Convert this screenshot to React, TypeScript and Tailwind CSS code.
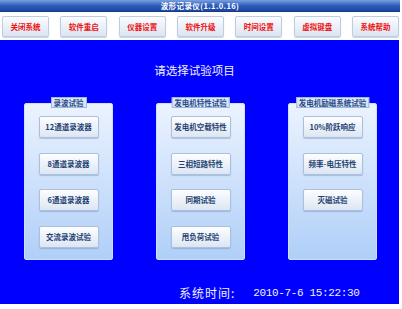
import React from "react";

const cjk = { fontFamily: '"Noto Sans CJK SC", "Noto Sans", sans-serif' };

const toolbar = ["关闭系统", "软件重启", "仪器设置", "软件升级", "时间设置", "虚拟键盘", "系统帮助"];

const panels = [
  { title: "录波试验", items: ["12通道录波器", "8通道录波器", "6通道录波器", "交流录波试验"] },
  { title: "发电机特性试验", items: ["发电机空载特性", "三相短路特性", "同期试验", "甩负荷试验"] },
  { title: "发电机励磁系统试验", items: ["10%阶跃响应", "频率-电压特性", "灭磁试验"] },
];

export default function App() {
  return (
    <div className="w-[402px] h-[309px] bg-white overflow-hidden" style={cjk}>
      <div className="w-[400px] h-[12px] bg-gradient-to-b from-[#7a9fe0] via-[#2f5fbc] to-[#1d469f] flex items-center justify-center border-b border-[#17388a]">
        <span className="text-white text-[7.5px] leading-[8px] tracking-[0.4px] font-bold">波形记录仪(1.1.0.16)</span>
      </div>
      <div className="flex justify-between w-[397px] ml-[2px] mt-[4px]">
        {toolbar.map((t) => (
          <div
            key={t}
            className="w-[47px] h-[21px] rounded-[2px] border border-[#bfcde3] bg-gradient-to-b from-[#fbfcfe] to-[#dbe5f2] flex items-center justify-center shadow-[0_1px_1px_rgba(120,140,180,0.4)]"
          >
            <span className="text-[#ee1010] text-[7.5px] leading-[8px] font-bold">{t}</span>
          </div>
        ))}
      </div>
      <div className="w-[399px] h-[264px] mt-[3px] bg-[#0000fe] flex flex-col">
        <div className="mt-[24px] h-[12px] flex justify-center pr-[10px]">
          <span className="text-[#eef2ff] text-[11.5px] leading-[12px]">请选择试验项目</span>
        </div>
        <div className="mt-[27px] flex pl-[24px] gap-[43px]">
          {panels.map((p) => (
            <div
              key={p.title}
              className="relative w-[89px] h-[157px] rounded-[2px] border border-[#cfe0fa] bg-gradient-to-b from-[#ecf3fe] to-[#b0cff8] flex flex-col items-center pt-[12px] gap-[14.5px]"
            >
              <div className="absolute top-[-7px] left-1/2 -translate-x-1/2 h-[11px] px-[2px] border border-[#9db8df] bg-[#d9e7fb] flex items-center whitespace-nowrap">
                <span className="text-[#2b4a82] text-[7.5px] leading-[8px] font-bold">{p.title}</span>
              </div>
              {p.items.map((it) => (
                <div
                  key={it}
                  className="w-[60px] h-[22px] rounded-[2px] border border-[#abc0dc] bg-gradient-to-b from-[#fdfeff] to-[#dce6f3] flex items-center justify-center shadow-[0_1px_1px_rgba(90,120,170,0.35)]"
                >
                  <span className="text-[#243f72] text-[7.5px] leading-[8px] font-bold whitespace-nowrap">{it}</span>
                </div>
              ))}
            </div>
          ))}
        </div>
        <div className="mt-[27px] flex items-center pl-[179px] h-[12px]">
          <span className="text-[#eef2ff] text-[12px] leading-[12px] tracking-[1px]">系统时间:</span>
          <span
            className="ml-[18px] text-[#eef2ff] text-[11px] leading-[12px] tracking-[-0.35px]"
            style={{ fontFamily: '"Liberation Mono", monospace' }}
          >
            2010-7-6 15:22:30
          </span>
        </div>
      </div>
    </div>
  );
}
